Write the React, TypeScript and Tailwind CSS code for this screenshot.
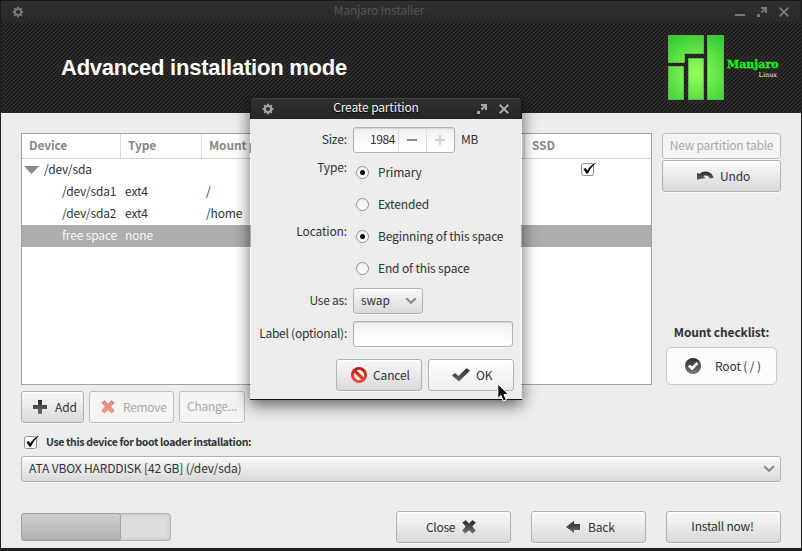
import type { ReactNode } from "react";

const BUTTON =
  "flex items-center rounded-[3px] border border-[#b1b1b1] bg-linear-to-b from-[#f9f9f9] to-[#d9d9d9] shadow-[inset_0_1px_0_#ffffff,0_1px_0_#f8f8f8]";
const DISABLED =
  "flex items-center rounded-[3px] border border-[#bdbebb] bg-[#f4f4f2] text-[#a9aaa7] shadow-[0_1px_0_#f8f8f8]";

function Gear({ color }: { color: string }) {
  return (
    <svg width="12" height="12" viewBox="0 0 12 12" fill="none" stroke={color}>
      <circle cx="6" cy="6" r="3.1" strokeWidth="2" />
      <path
        d="M6 .8v1.6M6 9.6v1.6M.8 6h1.6M9.6 6h1.6M2.2 2.2l1.2 1.2M8.6 8.6l1.2 1.2M9.8 2.2L8.6 3.4M3.4 8.6L2.2 9.8"
        strokeWidth="2"
      />
    </svg>
  );
}

function Maximize({ color }: { color: string }) {
  return (
    <svg width="10" height="10" viewBox="0 0 10 10" fill={color}>
      <path d="M0 7h3v3H0zM4 0h6v6H8V3.5L5.2 6.300L3.700 4.800L6.500 2H4z" />
    </svg>
  );
}

function CloseMark({ color }: { color: string }) {
  return (
    <svg width="10" height="10" viewBox="0 0 10 10" stroke={color} strokeWidth="2">
      <path d="M.7 .7L9.300 9.300M9.300 .7L.7 9.300" />
    </svg>
  );
}

function Chevron() {
  return (
    <svg width="12" height="8" viewBox="0 0 12 8" fill="none" stroke="#8b8b86" strokeWidth="2">
      <path d="M1.200 1.300L6 5.800L10.800 1.300" />
    </svg>
  );
}

function Check() {
  return (
    <svg width="16" height="14" viewBox="0 0 16 14" className="shrink-0">
      <rect x=".5" y="1.500" width="12" height="12" rx="2" fill="#fff" stroke="#8d8d8d" />
      <path d="M2.500 7L4.500 6L6.200 8.500C8.500 5 11 2.500 14.300 .8L14.600 1.300C11.500 4 9 7.500 7 11.500L5.500 11.700Z" fill="#000" />
    </svg>
  );
}

function Cross({ id, from, to }: { id: string; from: string; to: string }) {
  return (
    <svg width="16" height="16" viewBox="0 0 16 16" className="shrink-0">
      <linearGradient id={id} x1="0" y1="0" x2="0" y2="1">
        <stop offset="0" stopColor={from} />
        <stop offset="1" stopColor={to} />
      </linearGradient>
      <path
        d="M4.500 1L8 4.500L11.500 1L12.800 2.200L14.800 3.500L11.300 7.500L14.800 11.800L13 13.200L11.700 14.800L8 11.300L4.300 14.800L3 13.200L1.200 11.800L4.700 7.500L1.200 3.500L3.200 2.400Z"
        fill={`url(#${id})`}
      />
    </svg>
  );
}

function Plus() {
  return (
    <svg width="14" height="14" viewBox="0 0 14 14" className="shrink-0">
      <linearGradient id="plus" x1="0" y1="0" x2="0" y2="1">
        <stop offset="0" stopColor="#2a2a2a" />
        <stop offset="1" stopColor="#707070" />
      </linearGradient>
      <path d="M5 0h4v5h5v4H9v5H5V9H0V5h5z" fill="url(#plus)" />
    </svg>
  );
}

function Undo() {
  return (
    <svg width="17" height="10" viewBox="0 0 17 10" className="shrink-0">
      <linearGradient id="undo" x1="0" y1="0" x2="0" y2="1">
        <stop offset="0" stopColor="#252525" />
        <stop offset="1" stopColor="#686868" />
      </linearGradient>
      <path d="M0 2L2.500 3C5.500 .5 9 0 12 1.300C14.500 2.400 16 4.500 16.500 7L12.800 7.500C12 5.200 9.500 3.800 6.300 5L8.500 7L0 8.800Z" fill="url(#undo)" />
    </svg>
  );
}

function BackArrow() {
  return (
    <svg width="14" height="12" viewBox="0 0 14 12" className="shrink-0">
      <linearGradient id="back" x1="0" y1="0" x2="0" y2="1">
        <stop offset="0" stopColor="#252525" />
        <stop offset="1" stopColor="#707070" />
      </linearGradient>
      <path d="M0 6L8 0V3H14V9H8V12Z" fill="url(#back)" />
    </svg>
  );
}

function OkMark() {
  return (
    <svg width="18" height="14" viewBox="0 0 18 14" className="shrink-0">
      <linearGradient id="ok" x1="0" y1="0" x2="0" y2="1">
        <stop offset="0" stopColor="#282828" />
        <stop offset="1" stopColor="#686868" />
      </linearGradient>
      <path d="M0 7.500L3 5L6.500 8L14.500 .2L18 2.500L7 13.500Z" fill="url(#ok)" />
    </svg>
  );
}

function Forbidden() {
  return (
    <svg width="16" height="16" viewBox="0 0 16 16" className="shrink-0">
      <linearGradient id="stop" x1="0" y1="0" x2="0" y2="1">
        <stop offset="0" stopColor="#b8150c" />
        <stop offset="1" stopColor="#f0503a" />
      </linearGradient>
      <circle cx="8" cy="8" r="8" fill="url(#stop)" />
      <path d="M5.700 3.400A5.200 5.200 0 0 1 12.600 10.300ZM3.400 5.700A5.200 5.200 0 0 0 10.300 12.600Z" fill="#ececec" />
    </svg>
  );
}

function RoundCheck() {
  return (
    <svg width="16" height="16" viewBox="0 0 16 16" className="shrink-0">
      <linearGradient id="round" x1="0" y1="0" x2="0" y2="1">
        <stop offset="0" stopColor="#2d2d2d" />
        <stop offset="1" stopColor="#777" />
      </linearGradient>
      <circle cx="8" cy="8" r="8" fill="url(#round)" />
      <path d="M2.800 8.500L5 6.800L7 8.500L11.500 4L13.500 5.800L7.200 12.200Z" fill="#fff" />
    </svg>
  );
}

function Logo() {
  return (
    <svg width="56" height="65" viewBox="0 0 56 65" className="shrink-0">
      <radialGradient id="logo" gradientUnits="userSpaceOnUse" cx="28" cy="38" r="44">
        <stop offset="0" stopColor="#96ff58" />
        <stop offset="1" stopColor="#33c936" />
      </radialGradient>
      <g fill="url(#logo)" stroke="#62c75f" strokeOpacity=".8">
        <path d="M.5 .5H35.500V18.500H16.500V27.500H.5Z" />
        <path d="M.5 31.500H15.500V64.500H.5Z" />
        <path d="M20.500 23.500H35.500V64.500H20.500Z" />
        <path d="M39.500 .5H55.500V64.500H39.500Z" />
      </g>
    </svg>
  );
}

function Stripes() {
  return (
    <svg className="absolute inset-0 size-full" shapeRendering="crispEdges">
      <pattern id="stripes" width="4" height="4" patternUnits="userSpaceOnUse">
        <rect width="4" height="4" fill="#1c1b1a" />
        <path
          d="M3 0h1v1h-1zM2 1h1v1h-1zM1 2h1v1h-1zM0 3h1v1h-1zM2 0h1v1h-1zM1 1h1v1h-1zM0 2h1v1h-1zM3 3h1v1h-1z"
          fill="#302f2d"
        />
      </pattern>
      <rect width="100%" height="100%" fill="url(#stripes)" />
    </svg>
  );
}

function Row({ device, type, mount, selected }: { device: string; type: string; mount?: string; selected?: boolean }) {
  return (
    <div className={`flex h-[22px] items-center pb-[2px] ${selected ? "bg-[#adadad] text-[#f8f8f8]" : ""}`}>
      <span className="w-[103px] pl-10">{device}</span>
      <span className="w-[81px]">{type}</span>
      <span>{mount}</span>
    </div>
  );
}

function Radio({ on, children }: { on?: boolean; children: ReactNode }) {
  return (
    <div className="flex h-8 items-center pl-[3px]">
      <span className="flex size-[13px] items-center justify-center rounded-full border border-[#8f8f8f] bg-linear-to-b from-[#f0f0f0] to-white">
        {on && <span className="size-[5px] rounded-full bg-black" />}
      </span>
      <span className="pl-[9px]">{children}</span>
    </div>
  );
}

function Dialog() {
  return (
    <div className="absolute top-[97px] left-[250px] w-[272px] rounded-t-[3px] shadow-[0_5px_16px_rgba(0,0,0,0.6)]">
      <div className="flex h-[22px] items-center rounded-t-[3px] border border-b-0 border-[#1a1a1a] bg-linear-to-b from-[#303030] to-[#262626] pr-3 pl-[11px] shadow-[inset_0_1px_0_#454545]">
        <Gear color="#a9a9a9" />
        <span className="flex-1 pl-px pb-[3px] text-center text-[#f4f4f4] [text-shadow:0_1px_1px_#000]">Create partition</span>
        <Maximize color="#a9a9a9" />
        <span className="w-3" />
        <CloseMark color="#a9a9a9" />
      </div>
      <div className="mx-px h-[280px] bg-[#ececec] pt-2 pl-2">
        <div className="flex h-[26px] items-center">
          <span className="w-[88px] pb-[2px] text-right">Size:</span>
          <div className="ml-[6px] flex h-[26px] w-[102px] items-center rounded-[3px] border border-[#b1b1b1] bg-linear-to-b from-[#ededed] via-[#fbfbfb] via-50% to-white shadow-[inset_0_1px_1px_#d5d5d5]">
            <span className="w-[41px] pb-[2px] text-right tracking-[-0.4px]">1984</span>
            <span className="ml-[3px] flex h-full w-7 items-center justify-center border-l border-[#dcdcdc] pr-px">
              <span className="h-[2px] w-[10px] bg-[#8b8b86]" />
            </span>
            <span className="flex h-full flex-1 items-center justify-center border-l border-[#dcdcdc] pr-px">
              <svg width="10" height="10" stroke="#d2d2d0" strokeWidth="2"><path d="M5 0V10M0 5H10" /></svg>
            </span>
          </div>
          <span className="pb-[2px] pl-[6px]">MB</span>
        </div>
        <div className="mt-[3px] flex">
          <span className="w-[88px] pt-[2px] text-right">Type:</span>
          <div className="ml-[6px]">
            <Radio on>Primary</Radio>
            <Radio>Extended</Radio>
          </div>
        </div>
        <div className="flex">
          <span className="w-[88px] pt-[2px] text-right">Location:</span>
          <div className="ml-[6px]">
            <Radio on>Beginning of this space</Radio>
            <Radio>End of this space</Radio>
          </div>
        </div>
        <div className="mt-1 flex h-[26px] items-center">
          <span className="w-[88px] pb-[2px] text-right tracking-[-0.25px]">Use as:</span>
          <div className={`${BUTTON} ml-[6px] h-[26px] w-[70px] justify-between pr-[5px] pl-[7px]`}>
            <span className="pb-[2px]">swap</span>
            <Chevron />
          </div>
        </div>
        <div className="mt-[7px] flex h-[26px] items-center">
          <span className="w-[88px] pb-[2px] text-right tracking-[-0.24px]">Label (optional):</span>
          <span className="ml-[6px] h-[26px] w-[160px] rounded-[3px] border border-[#b1b1b1] bg-linear-to-b from-[#ededed] via-[#fbfbfb] via-50% to-white shadow-[inset_0_1px_1px_#d5d5d5,0_1px_0_#f8f8f8]" />
        </div>
        <div className="mt-3 ml-[77px] flex h-8 gap-[6px]">
          <div className={`${BUTTON} w-[86px] gap-[6px] pl-[14px]`}>
            <Forbidden />
            Cancel
          </div>
          <div className="flex w-[86px] items-center gap-[6px] rounded-[3px] border border-[#b1b1b1] bg-linear-to-b from-white to-[#eeeeee] pl-[23px]">
            <OkMark />
            OK
          </div>
        </div>
      </div>
      <div className="h-px bg-[#111]" />
    </div>
  );
}

export default function App() {
  return (
    <div className="relative h-[551px] w-[802px] overflow-hidden bg-[#1e1f21] font-['Noto_Sans_CJK_SC',sans-serif] text-[12px] leading-[18px] tracking-[-0.14px] whitespace-nowrap text-[#2e3436]">
      <div className="flex h-[22px] items-center border border-b-0 border-[#191919] bg-linear-to-b from-[#2f2f2f] to-[#292929] pr-3 pl-[11px]">
        <Gear color="#777" />
        <span className="flex-1 pr-px pb-[3px] text-center tracking-[-0.2px] text-[#555]">Manjaro Installer</span>
        <span className="mt-[6px] h-[2px] w-[10px] bg-[#777]" />
        <span className="w-3" />
        <Maximize color="#777" />
        <span className="w-3" />
        <CloseMark color="#777" />
      </div>
      <div className="relative mx-px h-[91px] bg-[#222]">
        <Stripes />
        <div className="relative flex h-full items-center">
          <h1 className="flex-1 pl-[60px] font-['Liberation_Sans',sans-serif] text-[22px] leading-[26px] font-bold tracking-[-0.24px] text-white">
            Advanced installation mode
          </h1>
          <Logo />
          <div className="mr-[22px] w-[55px] pt-px pl-[3px] font-['DejaVu_Serif',serif] tracking-normal">
            <div className="text-[11px] leading-[12px] font-bold text-[#14f514] [-webkit-text-stroke:0.3px_#14f514]">Manjaro</div>
            <div className="pt-px pr-[2px] text-right text-[6.5px] leading-[6px] text-[#f4f4f4]">Linux</div>
          </div>
        </div>
      </div>
      <div className="mx-px h-[435px] bg-[#ececec] px-5 pt-5">
        <div className="flex h-[252px] gap-[10px]">
          <div className="w-[631px] border border-[#a2a4a2] bg-white">
            <div className="flex h-[25px] border-b border-[#cfcfcf] font-bold text-[#888a85]">
              <span className="flex w-[99px] items-center border-r border-[#d9d9d9] pb-[2px] pl-[7px]">Device</span>
              <span className="flex w-[81px] items-center border-r border-[#d9d9d9] pb-[2px] pl-[7px]">Type</span>
              <span className="flex w-[323px] items-center border-r border-[#d9d9d9] pb-[2px] pl-[7px]">Mount point</span>
              <span className="flex items-center pb-[2px] pl-[7px]">SSD</span>
            </div>
            <div className="flex h-[22px] items-center pb-[2px] pl-[2px]">
              <svg width="15" height="8" className="mt-px"><path d="M0 0H15L7.500 8Z" fill="#888a85" /></svg>
              <span className="w-[540px] pl-[5px]">/dev/sda</span>
              <span className="pl-[2px]"><Check /></span>
            </div>
            <Row device="/dev/sda1" type="ext4" mount="/" />
            <Row device="/dev/sda2" type="ext4" mount="/home" />
            <Row device="free space" type="none" selected />
          </div>
          <div className="flex w-[119px] flex-col">
            <div className={`${DISABLED} h-[26px] justify-center pb-[2px] tracking-[-0.22px]`}>New partition table</div>
            <div className={`${BUTTON} mt-px h-8 gap-[6px] pl-[34px]`}>
              <Undo />
              Undo
            </div>
            <div className="mt-auto text-center font-bold">Mount checklist:</div>
            <div className="mx-1 mt-[6px] flex h-[38px] items-center gap-[14px] rounded-[5px] border border-[#cbcbcb] bg-[#fcfcfc] pb-px pl-[18px]">
              <RoundCheck />
              Root ( / )
            </div>
          </div>
        </div>
        <div className="mt-[6px] flex h-8 gap-[5px]">
          <div className={`${BUTTON} w-[63px] gap-2 pl-[11px]`}>
            <Plus />
            Add
          </div>
          <div className={`${DISABLED} w-[85px] gap-[7px] pl-[10px] tracking-[-0.3px]`}>
            <Cross id="remove" from="#d98a82" to="#f59b90" />
            Remove
          </div>
          <div className={`${DISABLED} w-[66px] justify-center pb-[2px] tracking-[-0.25px]`}>Change...</div>
        </div>
        <div className="mt-[9px] flex h-5 items-center gap-[6px] pl-[3px] text-[10.5px] font-bold tracking-[-0.35px]">
          <Check />
          <span className="pb-px">Use this device for boot loader installation:</span>
        </div>
        <div className={`${BUTTON} mt-1 h-[26px] justify-between pr-[5px] pl-[7px]`}>
          <span className="pb-[2px]">ATA VBOX HARDDISK [42 GB] (/dev/sda)</span>
          <Chevron />
        </div>
        <div className="mt-[29px] flex h-8 items-center">
          <div className="mr-auto h-7 w-[150px] rounded-[3px] border border-[#b3b3b3] bg-[#dcdcdc] shadow-[inset_0_0_4px_#bebebe]">
            <div className="-mt-px -ml-px h-7 w-[100px] rounded-[3px] border border-[#a0a0a0] bg-linear-to-b from-[#d0d0d0] to-[#b2b2b2]" />
          </div>
          <div className="flex h-8 gap-5">
            <div className={`${BUTTON} w-[115px] gap-[6px] pl-[29px]`}>
              <span className="tracking-[-0.3px]">Close</span>
              <Cross id="close" from="#252525" to="#777777" />
            </div>
            <div className={`${BUTTON} w-[115px] gap-2 pl-[34px]`}>
              <BackArrow />
              Back
            </div>
            <div className={`${BUTTON} w-[115px] justify-center pr-[2px] pb-[2px] tracking-[-0.2px]`}>Install now!</div>
          </div>
        </div>
      </div>
      <Dialog />
      <svg className="absolute top-[383px] left-[497px]" width="13" height="19" viewBox="0 0 13 19">
        <path d="M.8 1V15.500L4 12.500L6.300 18L9.300 16.700L7 11.500H11.500Z" fill="#111" stroke="#fff" />
      </svg>
    </div>
  );
}
